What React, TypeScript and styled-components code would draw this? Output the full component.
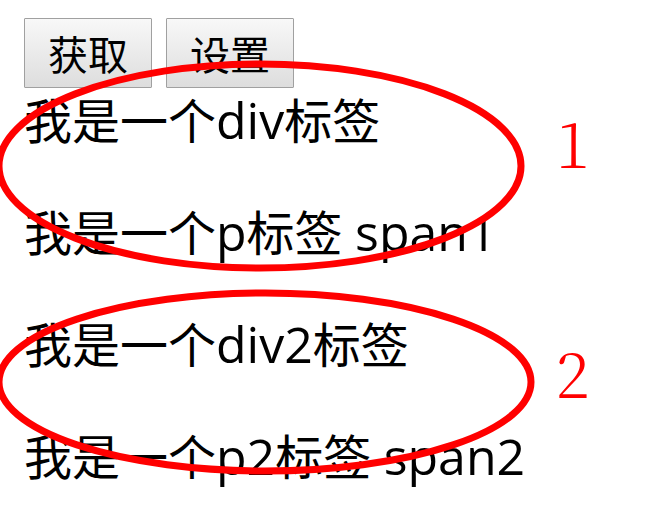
import React from "react";
import styled, { createGlobalStyle } from "styled-components";

const GlobalStyle = createGlobalStyle`
  body {
    margin: 0;
    background: #fff;
    color: #000;
    font-family: "Open Sans", "Noto Sans CJK SC", sans-serif;
  }
`;

const Page = styled.main`
  padding: 18px 24px 24px;
`;

const Toolbar = styled.div`
  display: flex;
  gap: 14px;
`;

const Button = styled.button`
  box-sizing: border-box;
  width: 128px;
  height: 70px;
  padding: 0;
  border: 1px solid #a0a0a0;
  border-radius: 1px;
  background: linear-gradient(#f8f8f8, #dddddd);
  color: #000;
  font: 40px/68px "Noto Sans CJK SC", sans-serif;
`;

const Groups = styled.div`
  display: grid;
  gap: 48px;
`;

const Group = styled.section`
  position: relative;
  display: grid;
  grid-template-columns: minmax(0, 532px) auto;
`;

const Lines = styled.div`
  display: grid;
  gap: 48px;
  font-size: 48px;
  line-height: 64px;
  white-space: nowrap;
`;

const Line = styled.div`
  height: 64px;
`;

const Paragraph = styled.p`
  height: 64px;
  margin: 0;
`;

const Latin = styled.span`
  font-size: 50px;
`;

const Ring = styled.svg`
  position: absolute;
  inset: 0;
  overflow: visible;
  pointer-events: none;
  fill: none;
  stroke: #f00;
  stroke-width: 7px;
`;

const Mark = styled.span<{ $drop: number }>`
  padding-top: ${(p) => p.$drop}px;
  color: #f00;
  font: 300 62px/64px "Noto Serif CJK SC", "Liberation Serif", serif;
`;

export default function App() {
  return (
    <>
      <GlobalStyle />
      <Page>
        <Toolbar>
          <Button type="button">获取</Button>
          <Button type="button">设置</Button>
        </Toolbar>
        <Groups>
          <Group>
            <Lines>
              <Line>我是一个<Latin>div</Latin>标签</Line>
              <Paragraph>我是一个<Latin>p</Latin>标签 <Latin>span1</Latin></Paragraph>
            </Lines>
            <Mark $drop={22}>1</Mark>
            <Ring width="530" height="176" aria-hidden="true">
              <ellipse cx="236" cy="78" rx="261" ry="102" />
            </Ring>
          </Group>
          <Group>
            <Lines>
              <Line>我是一个<Latin>div2</Latin>标签</Line>
              <Paragraph>我是一个<Latin>p2</Latin>标签 <Latin>span2</Latin></Paragraph>
            </Lines>
            <Mark $drop={28}>2</Mark>
            <Ring width="530" height="176" aria-hidden="true">
              <ellipse cx="241" cy="70" rx="266" ry="89" />
            </Ring>
          </Group>
        </Groups>
      </Page>
    </>
  );
}
